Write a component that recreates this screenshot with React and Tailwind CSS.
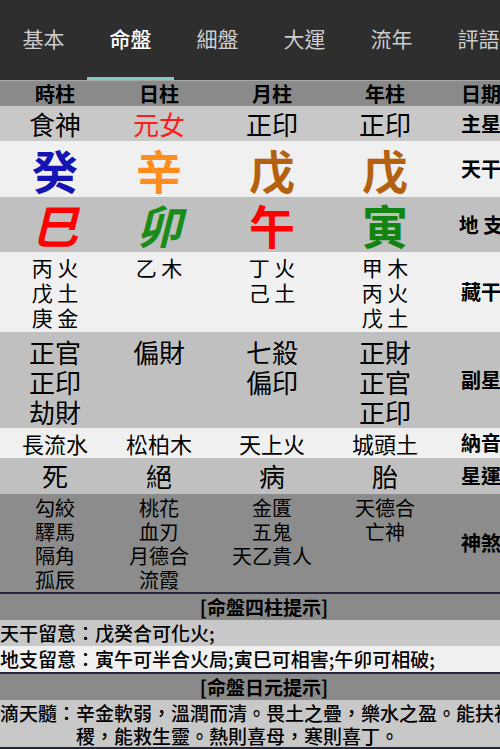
import React from "react";

const FONT = { fontFamily: '"Noto Sans CJK TC", "Noto Sans CJK SC", sans-serif' };
const COLS = "grid grid-cols-[110px_98px_128px_98px_94px]";

const tabs = ["基本", "命盤", "細盤", "大運", "流年", "評語"];

function Row({ bg, h, children, align = "items-center" }) {
  return <div className={`${COLS} ${bg} ${h} ${align}`}>{children}</div>;
}

function Label({ children }) {
  return (
    <div className="self-stretch flex items-center justify-center text-[20px] font-bold text-black whitespace-nowrap">
      {children}
    </div>
  );
}

function Stack({ items, cls }) {
  return (
    <div className={`flex flex-col items-center ${cls}`}>
      {items.map((t, i) => (
        <div key={i} className="whitespace-nowrap">{t}</div>
      ))}
    </div>
  );
}

export default function App() {
  return (
    <div className="w-[500px] h-[749px] overflow-hidden bg-[#f0f0f0]" style={FONT}>
      <div className="w-[528px] text-black">
        {/* Tab bar */}
        <div className="h-[80px] bg-[#2e2e2e] flex">
          {tabs.map((t, i) => (
            <div key={t} className="w-[87px] shrink-0 flex flex-col">
              <div
                className={`flex-1 flex items-center justify-center text-[21px] ${
                  i === 1 ? "text-white font-medium" : "text-[#cdcdcd]"
                }`}
              >
                {t}
              </div>
              <div className={`h-[3px] ${i === 1 ? "bg-[#80cbc4]" : ""}`} />
            </div>
          ))}
        </div>

        {/* Header */}
        <div className="h-[1px] bg-[#a8a8a8]" />
        <Row bg="bg-[#8a8a8a]" h="h-[25px]">
          {["時柱", "日柱", "月柱", "年柱", "日期"].map((t) => (
            <div key={t} className="text-center text-[20px] font-bold leading-[25px]">{t}</div>
          ))}
        </Row>

        {/* 主星 */}
        <Row bg="bg-[#c8c8c8]" h="h-[35px]">
          <div className="text-center text-[26px] leading-[35px]">食神</div>
          <div className="text-center text-[26px] leading-[35px] text-[#ff1a1a]">元女</div>
          <div className="text-center text-[26px] leading-[35px]">正印</div>
          <div className="text-center text-[26px] leading-[35px]">正印</div>
          <Label>主星</Label>
        </Row>

        {/* 天干 */}
        <Row bg="bg-[#f0f0f0]" h="h-[56px]">
          <div className="text-center text-[46px] font-bold leading-[56px] text-[#1414b4]">癸</div>
          <div className="text-center text-[46px] font-bold leading-[56px] text-[#ff8c1e]">辛</div>
          <div className="text-center text-[46px] font-bold leading-[56px] text-[#b4610f]">戊</div>
          <div className="text-center text-[46px] font-bold leading-[56px] text-[#b4610f]">戊</div>
          <Label>天干</Label>
        </Row>

        {/* 地支 */}
        <Row bg="bg-[#c0c0c0]" h="h-[55px]">
          <div className="text-center text-[46px] font-bold italic leading-[55px] text-[#ff0000]">巳</div>
          <div className="text-center text-[46px] font-bold italic leading-[55px] text-[#1a8c1a]">卯</div>
          <div className="text-center text-[46px] font-bold leading-[55px] text-[#ff0000]">午</div>
          <div className="text-center text-[46px] font-bold leading-[55px] text-[#118411]">寅</div>
          <Label>地 支</Label>
        </Row>

        {/* 藏干 */}
        <Row bg="bg-[#f0f0f0]" h="h-[80px]" align="items-start">
          <Stack items={["丙 火", "戊 土", "庚 金"]} cls="text-[21px] leading-[25px] pt-[3px]" />
          <Stack items={["乙 木"]} cls="text-[21px] leading-[25px] pt-[3px]" />
          <Stack items={["丁 火", "己 土"]} cls="text-[21px] leading-[25px] pt-[3px]" />
          <Stack items={["甲 木", "丙 火", "戊 土"]} cls="text-[21px] leading-[25px] pt-[3px]" />
          <Label>藏干</Label>
        </Row>

        {/* 副星 */}
        <Row bg="bg-[#c0c0c0]" h="h-[96px]" align="items-start">
          <Stack items={["正官", "正印", "劫財"]} cls="text-[26px] leading-[30px] pt-[5px]" />
          <Stack items={["偏財"]} cls="text-[26px] leading-[30px] pt-[5px]" />
          <Stack items={["七殺", "偏印"]} cls="text-[26px] leading-[30px] pt-[5px]" />
          <Stack items={["正財", "正官", "正印"]} cls="text-[26px] leading-[30px] pt-[5px]" />
          <Label>副星</Label>
        </Row>

        {/* 納音 */}
        <Row bg="bg-[#f0f0f0]" h="h-[30px]">
          {["長流水", "松柏木", "天上火", "城頭土"].map((t, i) => (
            <div key={i} className="text-center text-[22px] leading-[30px] whitespace-nowrap">{t}</div>
          ))}
          <Label>納音</Label>
        </Row>

        {/* 星運 */}
        <Row bg="bg-[#c0c0c0]" h="h-[36px]">
          {["死", "絕", "病", "胎"].map((t, i) => (
            <div key={i} className="text-center text-[26px] leading-[36px]">{t}</div>
          ))}
          <Label>星運</Label>
        </Row>

        {/* 神煞 */}
        <Row bg="bg-[#8c8c8c]" h="h-[98px]" align="items-start">
          <Stack items={["勾絞", "驛馬", "隔角", "孤辰"]} cls="text-[20px] leading-[24px] pt-[2px]" />
          <Stack items={["桃花", "血刃", "月德合", "流霞"]} cls="text-[20px] leading-[24px] pt-[2px]" />
          <Stack items={["金匱", "五鬼", "天乙貴人"]} cls="text-[20px] leading-[24px] pt-[2px]" />
          <Stack items={["天德合", "亡神"]} cls="text-[20px] leading-[24px] pt-[2px]" />
          <Label>神煞</Label>
        </Row>

        {/* 四柱提示 */}
        <div className="h-[2px] bg-[#24243a]" />
        <div className="h-[26px] bg-[#8a8a8a] flex items-center justify-center text-[19px] font-bold">
          [命盤四柱提示]
        </div>
        <div className="h-[26px] bg-[#c8c8c8] flex items-center text-[19px] font-medium whitespace-nowrap">
          天干留意：戊癸合可化火;
        </div>
        <div className="h-[26px] bg-[#f0f0f0] flex items-center text-[19px] font-medium whitespace-nowrap">
          地支留意：寅午可半合火局;寅巳可相害;午卯可相破;
        </div>

        {/* 日元提示 */}
        <div className="h-[2px] bg-[#24243a]" />
        <div className="h-[26px] bg-[#8a8a8a] flex items-center justify-center text-[19px] font-bold">
          [命盤日元提示]
        </div>
        <div className="bg-[#c8c8c8] flex text-[19px] font-medium leading-[23px] pt-[1px]">
          <div className="shrink-0 whitespace-nowrap">滴天髓：</div>
          <div className="flex-1">辛金軟弱，溫潤而清。畏土之疊，樂水之盈。能扶社稷，能救生靈。熱則喜母，寒則喜丁。</div>
        </div>
        <div className="h-[2px] bg-[#24243a]" />
      </div>
    </div>
  );
}
